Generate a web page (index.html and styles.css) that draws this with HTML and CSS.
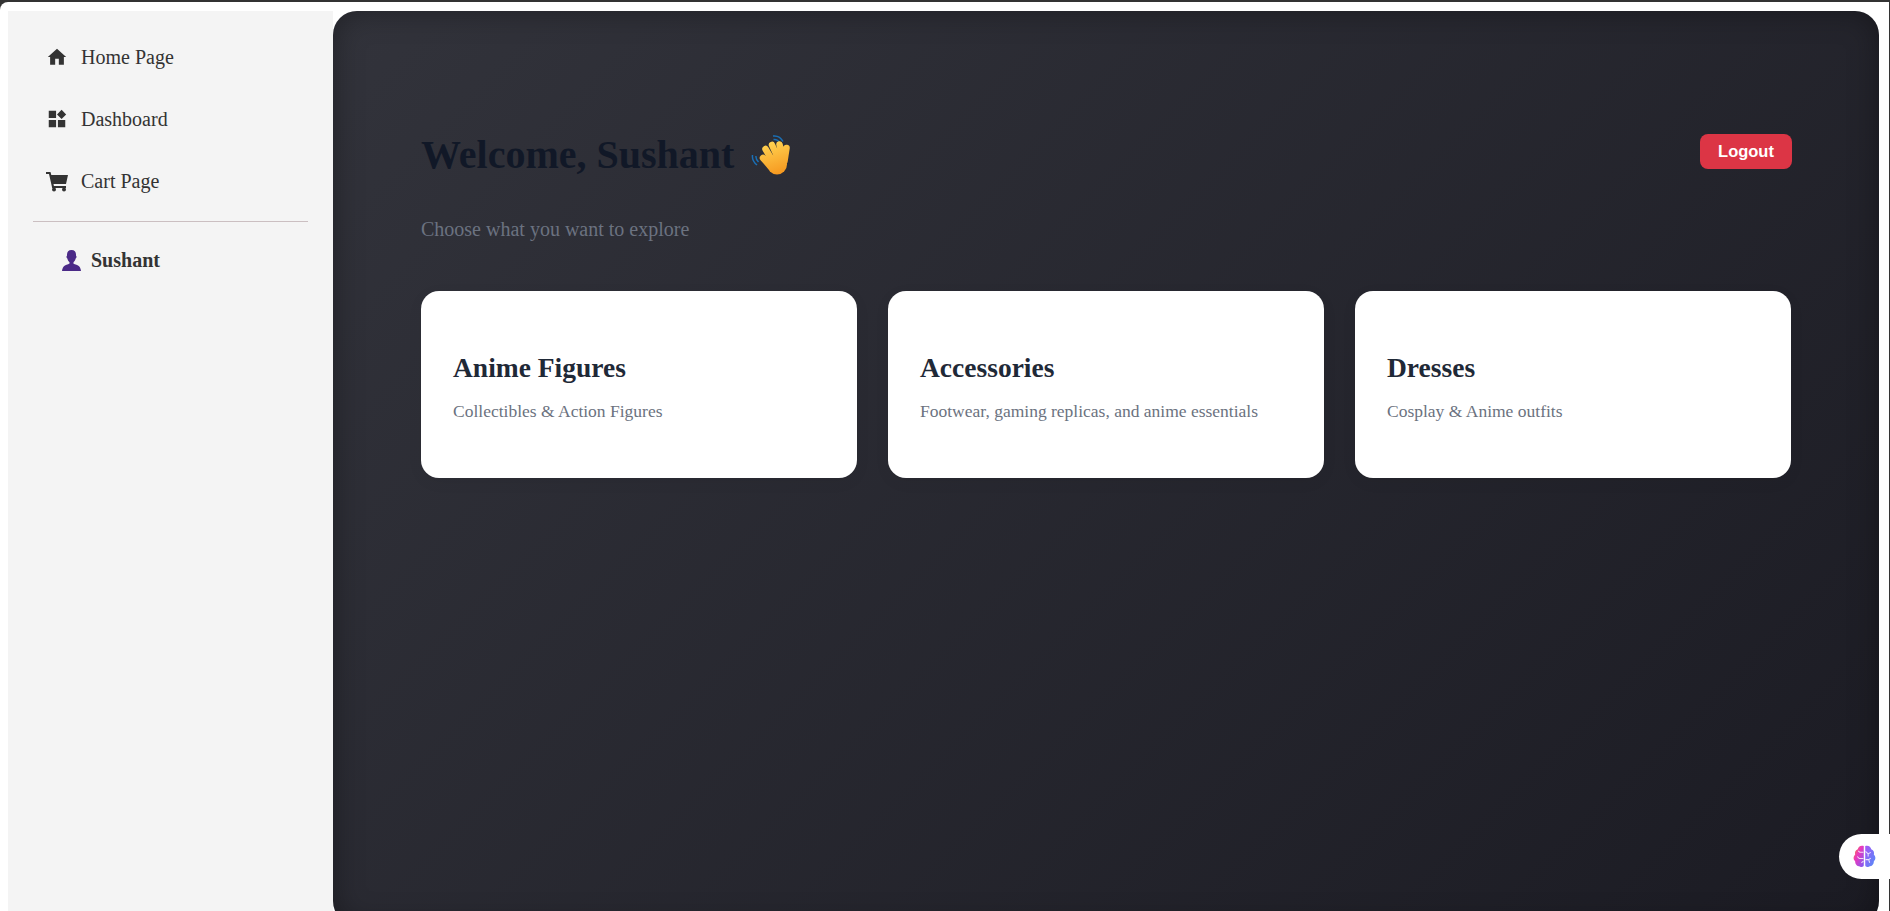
FILE: index.html
```html
<!DOCTYPE html>
<html lang="en">
<head>
    <meta charset="UTF-8">
    <meta name="viewport" content="width=device-width, initial-scale=1.0">
    <title>Dashboard</title>
    <link rel="stylesheet" href="styles.css">
</head>
<body>
    <div class="frame">
        <aside class="sidebar">
            <a class="nav-item" href="#">
                <svg class="nav-icon" viewBox="0 0 24 24"><path d="M10 20.500v-6.500h4v6.500h5.500v-8.500H22L12 3 2 12h2.500v8.500z"/></svg>
                <span>Home Page</span>
            </a>
            <a class="nav-item" href="#">
                <svg class="nav-icon" viewBox="0 0 24 24"><path d="M3 3h8v8H3zM3 13h8v8H3zM13 13h8v8h-8zM17 2l5 5-5 5-5-5z"/></svg>
                <span>Dashboard</span>
            </a>
            <a class="nav-item" href="#">
                <svg class="nav-icon cart-icon" viewBox="0 0 24 24"><path d="M1 3h4.500l.8 3H23l-2 9H8.500l.4 2H21v2H7.200L4 5H1z"/><circle cx="9" cy="20.500" r="2"/><circle cx="19" cy="20.500" r="2"/></svg>
                <span>Cart Page</span>
            </a>
            <hr class="divider">
            <div class="user-row">
                <svg class="user-icon" viewBox="0 0 19 21"><path d="M9.500 0C6.500 0 5 2 5 4.500v1.300c-.7 0-.7 2.200.2 2.400.5 2 1.400 3.300 2.300 4v1.300C6 14.500 3 15 1.700 16.500.6 17.800.2 19.500 0 21h19c-.2-1.500-.6-3.200-1.700-4.500C16 15 13 14.500 11.500 13.800v-1.600c.9-.7 1.800-2 2.300-4 .9-.2.9-2.400.2-2.400V4.500C14 2 12.500 0 9.500 0z"/></svg>
                <span>Sushant</span>
            </div>
        </aside>
        <main class="content">
            <header class="top-row">
                <h1 class="welcome">Welcome, Sushant
                    <svg class="wave" viewBox="0 0 40 40" role="img" aria-label="waving hand">
                        <defs>
                            <linearGradient id="handFill" gradientUnits="userSpaceOnUse" x1="20" y1="8" x2="30" y2="39">
                                <stop offset="0" stop-color="#ffd04f"/>
                                <stop offset="1" stop-color="#f6981f"/>
                            </linearGradient>
                        </defs>
                        <path class="wave-lines" d="M2.500 20c-.5 3.500 1 7 4.500 10M6 21c-.3 2 .5 4 2.500 6M23 1c4-.5 8 1.500 10 5.500M23.500 4.500c2.500-.3 5 1 6.500 3.500"/>
                        <g class="wave-hand">
                            <path d="M13 23l7 8M15.500 14l7 12M22 10l5.500 12M29.500 9.500l3 12M36.500 13l-2 13"/>
                            <ellipse cx="27" cy="29.500" rx="10" ry="10"/>
                        </g>
                    </svg>
                </h1>
                <button class="logout">Logout</button>
            </header>
            <p class="subtitle">Choose what you want to explore</p>
            <section class="cards">
                <div class="card">
                    <h2>Anime Figures</h2>
                    <p>Collectibles &amp; Action Figures</p>
                </div>
                <div class="card">
                    <h2>Accessories</h2>
                    <p>Footwear, gaming replicas, and anime essentials</p>
                </div>
                <div class="card">
                    <h2>Dresses</h2>
                    <p>Cosplay &amp; Anime outfits</p>
                </div>
            </section>
        </main>
    </div>
    <div class="brain-tab">
        <svg viewBox="0 0 24 24" width="25" height="25">
            <defs>
                <linearGradient id="brainLeft" x1="0" y1="0" x2="1" y2="1">
                    <stop offset="0" stop-color="#f7931e"/>
                    <stop offset="0.4" stop-color="#ec38bc"/>
                    <stop offset="1" stop-color="#7a5cf5"/>
                </linearGradient>
                <linearGradient id="brainRight" x1="0" y1="0" x2="1" y2="1">
                    <stop offset="0" stop-color="#a855f7"/>
                    <stop offset="1" stop-color="#4f8ff7"/>
                </linearGradient>
            </defs>
            <path fill="url(#brainLeft)" d="M11.300 2C8 1 6 3 5.500 5 3 6 2.500 8 3 10c-2 2-2 5 0 6.500 0 3 2 5 4.500 5 1.500 1 3.800.5 3.800-1z"/>
            <path fill="url(#brainRight)" d="M12.700 2c3.300-1 5.300 1 5.800 3C21 6 21.500 8 21 10c2 2 2 5 0 6.500 0 3-2 5-4.500 5-1.500 1-3.800.5-3.800-1z"/>
            <path class="brain-lines" d="M11 8H7.500L6 6.500M11 14H7l-2-2M9 18l2-1.500M13 7l2.500 2.500L18 8M15.500 9.500V12M13 15h3l2-1.500M16 15l1 3"/>
        </svg>
    </div>
</body>
</html>
```
FILE: styles.css
```css
html, body {
    margin: 0;
    padding: 0;
    height: 100%;
    overflow: hidden;
    background-color: #333;
}

body {
    font-family: "Liberation Serif", "Times New Roman", serif;
    padding-top: 2px;
    box-sizing: border-box;
}

.frame {
    display: flex;
    height: 909px;
    margin-right: 1px;
    padding: 9px 10px 0 8px;
    box-sizing: border-box;
    background-color: #fff;
    border-top-left-radius: 8px;
}

.sidebar {
    width: 325px;
    flex-shrink: 0;
    padding: 15px 25px 0;
    box-sizing: border-box;
    background-color: #f4f4f4;
}

.nav-item {
    display: flex;
    align-items: center;
    height: 62px;
    color: #333;
    font-size: 20px;
    text-decoration: none;
}

.nav-icon {
    width: 22px;
    height: 22px;
    margin: 0 13px;
    fill: #333;
}

.cart-icon {
    width: 24px;
    height: 24px;
    margin: 0 12px;
}

.divider {
    height: 1px;
    margin: 9px 0 0;
    border: none;
    background-color: #cbbfc1;
}

.user-row {
    display: flex;
    align-items: center;
    margin: 27px 0 0 29px;
    color: #333;
    font-size: 20px;
    font-weight: bold;
}

.user-icon {
    width: 19px;
    height: 21px;
    margin-right: 10px;
    fill: #4b2a87;
}

.content {
    flex: 1;
    height: 914px;
    padding: 121px 88px 0;
    box-sizing: border-box;
    border-radius: 24px;
    background: linear-gradient(135deg, #32333b, #1b1b23);
    box-shadow: inset 0 0 30px rgba(0, 0, 0, 0.35);
}

.top-row {
    display: flex;
    align-items: flex-start;
    justify-content: space-between;
}

.welcome {
    display: flex;
    align-items: center;
    gap: 16px;
    margin: 0;
    color: #111827;
    font-size: 40px;
    line-height: 46px;
}

.wave {
    width: 40px;
    height: 40px;
}

.wave-lines {
    fill: none;
    stroke: #1a6fb5;
    stroke-width: 1.500;
}

.wave-hand {
    fill: url(#handFill);
    stroke: url(#handFill);
    stroke-width: 6.500;
    stroke-linecap: round;
}

.wave-hand ellipse {
    stroke: none;
}

.logout {
    width: 92px;
    height: 35px;
    margin: 2px -1px 0 0;
    border: none;
    border-radius: 8px;
    background-color: #dc3545;
    color: #fff;
    font-family: "Liberation Sans", Arial, sans-serif;
    font-size: 16.500px;
    font-weight: bold;
}

.subtitle {
    margin: 40px 0 0;
    color: #6b7280;
    font-size: 20px;
}

.cards {
    display: grid;
    grid-template-columns: repeat(3, 1fr);
    gap: 31px;
    margin-top: 50px;
}

.card {
    height: 187px;
    padding: 61px 32px 0;
    box-sizing: border-box;
    border-radius: 18px;
    background-color: #fff;
    box-shadow: 0 4px 16px rgba(0, 0, 0, 0.05);
}

.card h2 {
    margin: 0;
    color: #1f2937;
    font-size: 27.500px;
}

.card p {
    margin: 17px 0 0;
    color: #6b7280;
    font-size: 17.500px;
}

.brain-tab {
    position: absolute;
    top: 834px;
    right: 0;
    display: flex;
    align-items: center;
    width: 51px;
    height: 45px;
    padding-left: 13px;
    box-sizing: border-box;
    border-radius: 23px 0 0 23px;
    background-color: #fff;
}

.brain-lines {
    fill: none;
    stroke: #fff;
    stroke-width: 1;
    opacity: 0.8;
}
```
